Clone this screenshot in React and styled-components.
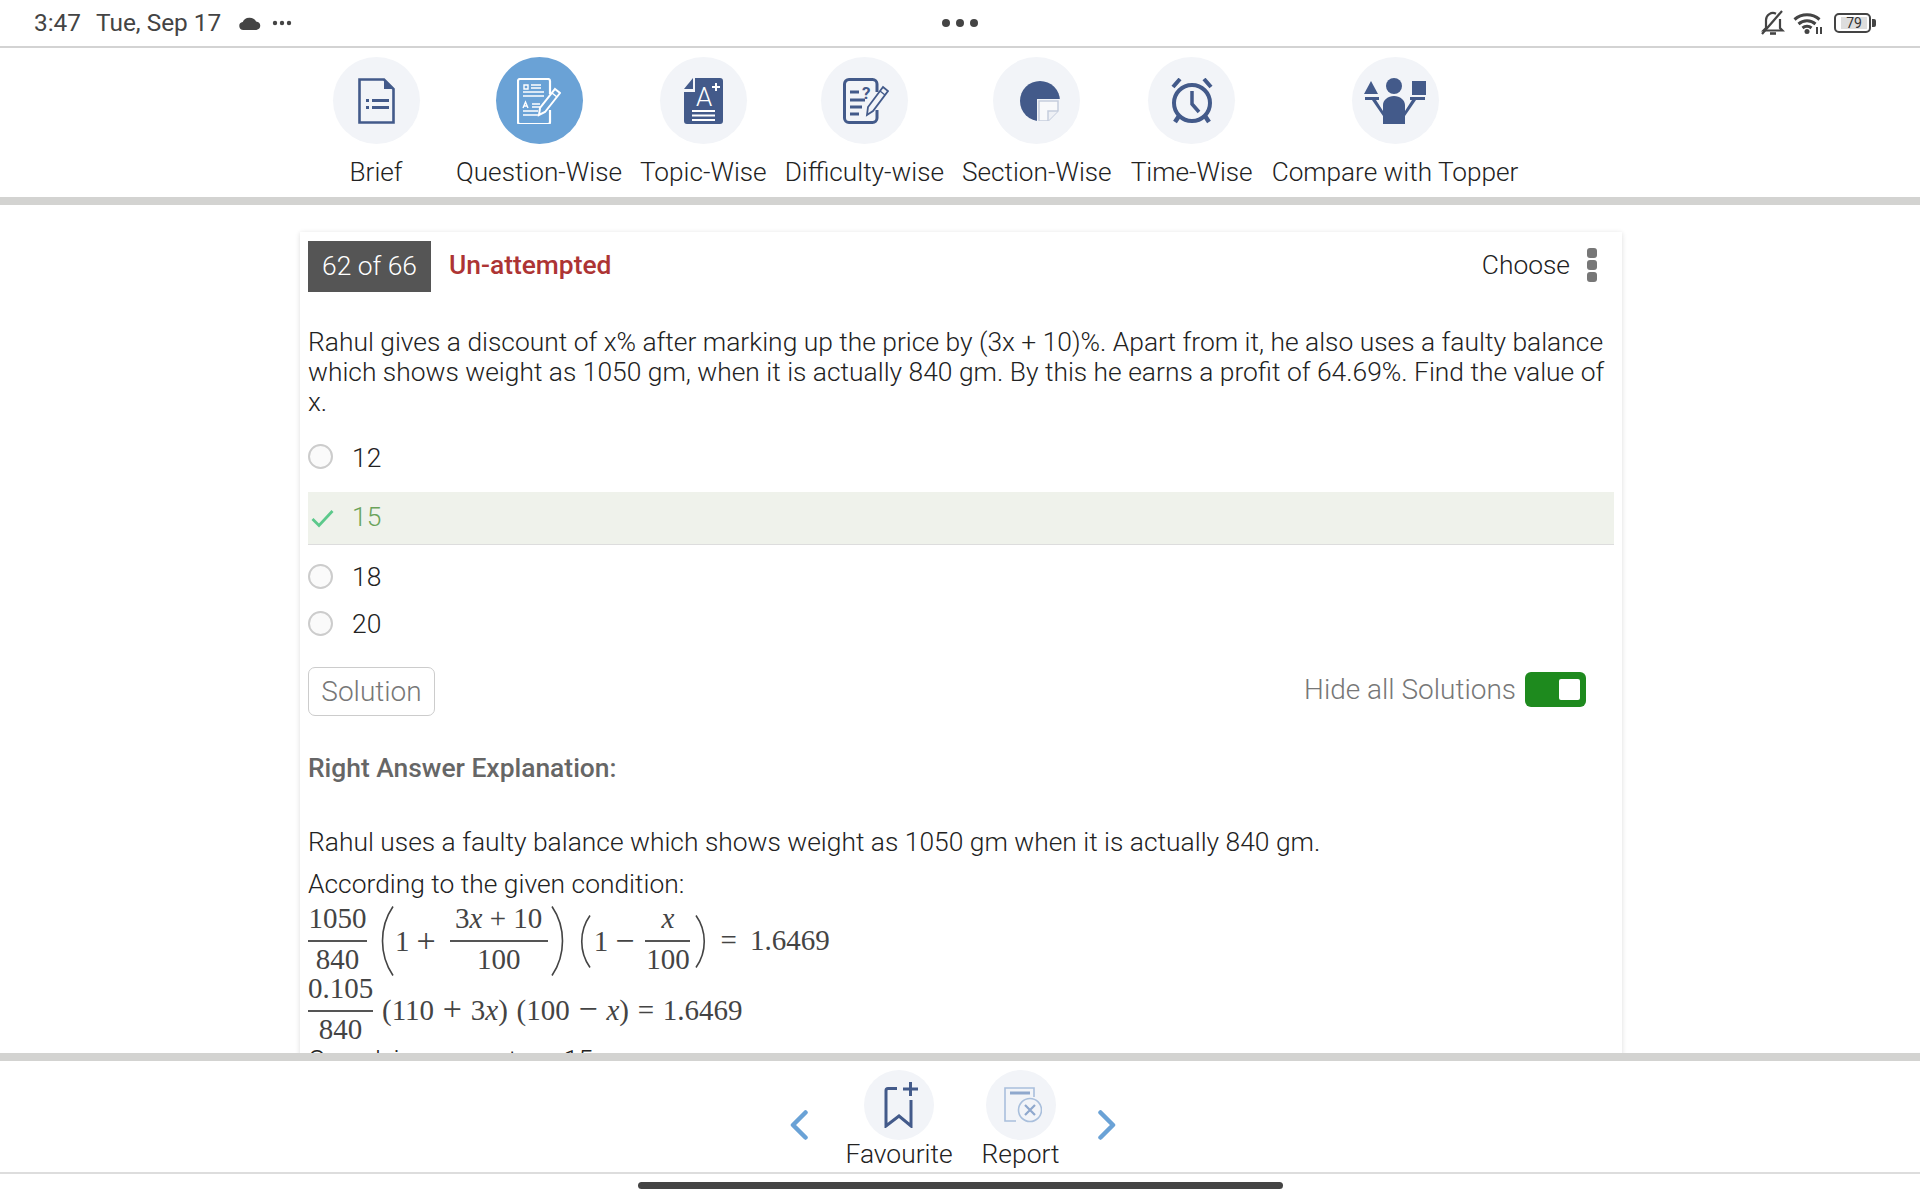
import React from "react";
import styled, { createGlobalStyle } from "styled-components";

const Global = createGlobalStyle`
  html, body { margin: 0; padding: 0; width: 1920px; height: 1200px; overflow: hidden; background: #fff; }
  body { font-family: Roboto, "Liberation Sans", sans-serif; color: #222; }
  * { box-sizing: border-box; }
`;

const INK = "#435a8a";

const Page = styled.div`
  width: 1920px; height: 1200px; display: flex; flex-direction: column; background: #fff;
`;
const StatusBar = styled.div`
  height: 48px; border-bottom: 2px solid #d3d3d3; display: grid; grid-template-columns: 1fr auto 1fr;
  align-items: center; padding: 0 43px; color: #444; flex: none;
`;
const StatusLeft = styled.div`display: flex; align-items: center; font-size: 24.4px; line-height: 28px; margin-left: -9px;`;
const DateText = styled.span`margin-left: 15px;`;
const CloudWrap = styled.span`display: flex; margin-left: 18px;`;
const MoreWrap = styled.span`display: flex; margin-left: 11px;`;
const CenterDots = styled.div`display: flex; gap: 6px; justify-self: center;`;
const CenterDot = styled.span`width: 8px; height: 8px; border-radius: 50%; background: #444;`;
const StatusRight = styled.div`display: flex; justify-content: flex-end; align-items: center; gap: 8px;`;
const Battery = styled.div`
  position: relative; width: 37px; height: 20px; border: 2px solid #444; border-radius: 5px; padding: 2px;
  margin-left: 2px; margin-right: 6px; font-size: 14px; line-height: 12px; color: #333;
  &::after { content: ""; position: absolute; right: -7px; top: 4px; width: 4px; height: 8px; background: #444; border-radius: 0 2px 2px 0; }
`;
const BatteryFill = styled.div`height: 12px; background: #ddd; text-align: center; width: 26px; margin-left: 3px; font-weight: 400;`;

const TabBar = styled.div`
  height: 157px; border-bottom: 8px solid #d3d3d1; display: flex; justify-content: flex-start; gap: 18px; flex: none;
  padding: 9px 0 0 314px;
`;
const Tab = styled.div`display: flex; flex-direction: column; align-items: center; min-width: 124px;`;
const TabCircle = styled.div`
  width: 87px; height: 87px; border-radius: 50%; display: flex; align-items: center; justify-content: center;
  padding-left: ${p => p.$pl || 0}px;
  background: ${p => (p.$active ? "#6aa2d6" : "#f2f4f8")};
`;
const TabLabel = styled.div`
  margin-top: 13px; font-size: 26.2px; font-weight: 300; line-height: 30px; color: #222; white-space: nowrap;
`;

const Main = styled.div`flex: 1; min-height: 0; overflow: hidden; padding: 27px 0 0 300px;`;
const Card = styled.div`
  width: 1322px; padding: 9px 8px 0; background: #fff; height: 1000px;
  box-shadow: 0 1px 5px rgba(0,0,0,.14);
`;
const CardHead = styled.div`display: flex; align-items: center; height: 51px; padding-right: 17px;`;
const Badge = styled.div`
  width: 123px; height: 51px; background: #555; color: #fff; font-size: 26.4px; font-weight: 300; padding-bottom: 2px;
  display: flex; align-items: center; justify-content: center;
`;
const HeadText = styled.div`padding-bottom: 4px;`;
const Status = styled(HeadText)`margin-left: 18px; color: #ad3434; font-size: 26.4px; font-weight: 500;`;
const Choose = styled(HeadText)`margin-left: auto; font-size: 26.4px; font-weight: 300; color: #222;`;
const Kebab = styled.div`display: flex; flex-direction: column; gap: 2px; margin: 0 0 3px 17px;`;
const KebabDot = styled.span`width: 10px; height: 10px; border-radius: 3px; background: #777;`;
const Question = styled.p`
  margin: 35px 0 0; font-size: 26.4px; font-weight: 300; line-height: 30px; color: #222;
`;
const Options = styled.div`display: flex; flex-direction: column; margin-top: 13px;`;
const Option = styled.div`
  display: flex; align-items: center; height: ${p => p.$h}px;
  ${p => p.$correct && `background: #eff2eb; border-bottom: 1px solid #ddd; margin: 10px 0 8px;`}
  font-size: 26.4px; font-weight: 300; color: ${p => (p.$correct ? "#6aa35a" : "#222")};
`;
const Radio = styled.span`
  width: 25px; height: 25px; border-radius: 50%; border: 2px solid #ccc; background: #fafafa; flex: none;
`;
const CheckBox = styled.span`width: 25px; height: 25px; display: flex; align-items: center; justify-content: center; flex: none; margin-left: 2px;`;
const OptionText = styled.span`
  margin-left: ${p => (p.$correct ? 17 : 19)}px;
  padding: ${p => (p.$correct ? "0 0 2px" : p.$tall ? "3px 0 0" : "1px 0 0")};
`;
const SolutionRow = styled.div`display: flex; align-items: center; margin-top: 20px; padding-right: 28px;`;
const SolutionBtn = styled.div`
  width: 127px; height: 49px; border: 1px solid #ccc; border-radius: 7px; color: #777;
  font-size: 28px; font-weight: 300; display: flex; align-items: center; justify-content: center;
`;
const HideLabel = styled.div`margin-left: auto; font-size: 28px; font-weight: 300; color: #777; position: relative; top: -2px;`;
const Toggle = styled.div`
  width: 61px; height: 35px; margin-left: 9px; border-radius: 6px; background: #1e8a1e; display: flex; align-items: center;
  justify-content: flex-end; padding-right: 6px; position: relative; top: -2px;
`;
const Knob = styled.span`width: 21px; height: 21px; background: #fff; border-radius: 2px;`;
const Heading = styled.div`margin-top: 37px; font-size: 26.4px; font-weight: 500; line-height: 30px; color: #666;`;
const Para = styled.div`margin-top: ${p => p.$mt}px; font-size: 26.4px; font-weight: 300; line-height: 30px; color: #222;`;
const MathBlock = styled.div`margin-top: 7px;`;
const MathRow = styled.div`
  display: flex; align-items: center; height: 70px; font-family: "Liberation Serif", serif; font-size: 29px; color: #444;
  white-space: nowrap;
`;
const Frac = styled.span`
  display: inline-flex; flex-direction: column; align-items: center; width: ${p => p.$w}px; flex: none; margin-left: ${p => p.$ml || 0}px;
`;
const Num = styled.span`line-height: 34px; height: 39px;`;
const Bar = styled.span`width: 100%; height: 2px; background: #555; flex: none;`;
const Den = styled.span`line-height: 35px; height: 39px;`;
const Piece = styled.span`
  margin: 0 0 ${p => p.$mb || 0}px ${p => p.$ml || 0}px; flex: none; word-spacing: ${p => p.$ws || 0}px;
`;
const Op = styled.span`font-size: 34px; line-height: 1;`;
const It = styled.i`font-style: italic;`;
const BigParen = styled.svg`flex: none; margin-left: ${p => p.$ml || 0}px;`;
const Clipped = styled.div`margin-top: -1px; font-size: 26.4px; font-weight: 300; line-height: 30px; color: #222;`;

const BottomBar = styled.div`
  height: 121px; flex: none; border-top: 8px solid #d3d3d1; border-bottom: 2px solid #ddd; display: flex; justify-content: center;
  padding: 9px 14px 0 0;
`;
const Chevron = styled.div`display: flex; align-items: flex-start; padding-top: 40px; margin: ${p => p.$m};`;
const BottomItem = styled.div`display: flex; flex-direction: column; align-items: center;`;
const BottomCircle = styled.div`
  width: 70px; height: 70px; border-radius: 50%; background: #f2f4f8; display: flex; align-items: center; justify-content: center; padding-left: 4px;
`;
const BottomLabel = styled.div`font-size: 26.4px; font-weight: 300; line-height: 30px; margin-top: -1px; color: #222; white-space: nowrap;`;
const BottomGap = styled.div`width: 29px;`;
const GestureZone = styled.div`height: 26px; flex: none; padding-top: 8px; display: flex; justify-content: center;`;
const GestureBar = styled.div`width: 645px; height: 7px; border-radius: 4px; background: #444;`;

const BriefIcon = () => (
  <svg width="37" height="46" viewBox="0 0 37 46">
    <path d="M1.5 1.5H26L35.5 11V44.5H1.5Z" fill="none" stroke={INK} strokeWidth="2.6" />
    <path d="M26 1.5V11H35.5Z" fill={INK} />
    <path d="M8 21h3v3H8zM8 28h3v3H8zM14 21h17v3H14zM14 28h17v3H14z" fill={INK} />
  </svg>
);
const QuestionIcon = () => (
  <svg width="44" height="46" viewBox="0 0 44 46" fill="none" stroke="#fff" strokeWidth="2">
    <path d="M33 16V3a2 2 0 0 0-2-2H3a2 2 0 0 0-2 2v41a2 2 0 0 0 2 2h28a2 2 0 0 0 2-2V32" strokeWidth="2.2" />
    <path d="M7 7h4v4H7z" strokeWidth="1.4" />
    <path d="M14 7h10M14 10h10M6 14h21M6 18h21M15 26h8M15 29h8M6 33h15M6 37h15" strokeWidth="1.5" />
    <path d="M6 30l2.5-6 2.5 6M7 28h3" strokeWidth="1.4" />
    <path d="M38 11l5 4-15 19-6 3 1-7z" fill="#6aa2d6" strokeWidth="2" />
    <path d="M35 15l5 4" strokeWidth="1.6" />
  </svg>
);
const TopicIcon = () => (
  <svg width="39" height="46" viewBox="0 0 39 46">
    <path d="M11 0H36a3 3 0 0 1 3 3V43a3 3 0 0 1-3 3H3a3 3 0 0 1-3-3V14H11Z" fill={INK} />
    <path d="M9 0V11H0Z" fill={INK} />
    <text x="20" y="28" textAnchor="middle" fontFamily="Roboto" fontWeight="300" fontSize="26" fill="#fff">A</text>
    <path d="M28 9h8M32 5v8" stroke="#fff" strokeWidth="2" />
    <path d="M8 33h23M8 37.500h23M8 42h23" stroke="#fff" strokeWidth="2" />
  </svg>
);
const DifficultyIcon = () => (
  <svg width="46" height="46" viewBox="0 0 46 46" fill="none" stroke={INK}>
    <path d="M34 14V6a4.500 4.500 0 0 0-4.500-4.500H6A4.500 4.500 0 0 0 1.500 6v34A4.500 4.500 0 0 0 6 44.500h23.500A4.500 4.500 0 0 0 34 40V32" strokeWidth="3" />
    <text x="19" y="21" fontFamily="Roboto" fontWeight="700" fontSize="17" fill={INK} stroke="none">?</text>
    <path d="M7 14h9M7 22h15M7 29h12M7 36h9" strokeWidth="3" />
    <path d="M40 9l5 4-15 20-6 4 1-8z" fill="#f2f4f8" strokeWidth="1.800" />
    <path d="M37 13l5 4" strokeWidth="1.500" />
  </svg>
);
const SectionIcon = () => (
  <svg width="40" height="40" viewBox="0 0 40 40">
    <circle cx="20" cy="20" r="20" fill={INK} />
    <path d="M17 18H40V40H17Z" fill="#f2f4f8" />
    <path d="M19 20H38V30L28 40H19Z" fill="#f8f9fb" stroke="#c5cddd" strokeWidth="1.500" />
    <path d="M38 30H28V40" fill="#eef0f5" stroke="#c5cddd" strokeWidth="1.500" />
  </svg>
);
const TimeIcon = () => (
  <svg width="44" height="46" viewBox="0 0 44 46" fill="none" stroke={INK}>
    <circle cx="22" cy="25" r="18" strokeWidth="4" />
    <path d="M22 13V26L29 34" strokeWidth="3.500" />
    <path d="M10 1L3 9M34 1l7 8" strokeWidth="4" />
    <path d="M9 38l-4 6M35 38l4 6" strokeWidth="4.500" />
  </svg>
);
const CompareIcon = () => (
  <svg width="62" height="46" viewBox="0 0 62 46" fill={INK}>
    <circle cx="30" cy="8" r="8" />
    <path d="M0 16L7 3L14 16Z" />
    <path d="M48 3H62V17H48Z" />
    <path d="M1 19H15V22H12L19 33V27C19 22 24 18 30 18C36 18 41 22 41 27V33L48 22H46V19H61V22H52L41 38V46H19V38L8 22H1Z" />
  </svg>
);
const CloudIcon = () => (
  <svg width="22" height="13" viewBox="0 0 20 13" preserveAspectRatio="none"><path d="M4 13a4 4 0 0 1-.6-7.900A6.500 6.500 0 0 1 15.500 4.500 4.300 4.300 0 0 1 15.800 13Z" fill="#444" /></svg>
);
const MoreIcon = () => (
  <svg width="20" height="6" viewBox="0 0 20 6" fill="#444"><circle cx="3" cy="3" r="2.200" /><circle cx="10" cy="3" r="2.200" /><circle cx="17" cy="3" r="2.200" /></svg>
);
const BellOffIcon = () => (
  <svg width="24" height="26" viewBox="0 0 24 26" fill="none" stroke="#444" strokeWidth="2.200">
    <path d="M5 18V10a7 7 0 0 1 10-6.300M19 9v9l2.500 2.500H2.500L5 18" />
    <path d="M9 23.500h6" strokeWidth="2.600" />
    <path d="M1 24L21 1" />
  </svg>
);
const WifiIcon = () => (
  <svg width="31" height="24" viewBox="0 0 31 24" fill="none" stroke="#444" strokeWidth="3">
    <path d="M1.500 8.500a19 19 0 0 1 25 0" />
    <path d="M5.500 13a13 13 0 0 1 17 0" />
    <path d="M9.500 17a7 7 0 0 1 9 0" />
    <circle cx="14" cy="20.500" r="2.500" fill="#444" stroke="none" />
    <path d="M24 16v7M28 16v7" strokeWidth="2" />
  </svg>
);
const CheckIcon = () => (
  <svg width="23" height="19" viewBox="0 0 23 19" fill="none" stroke="#5cc98b" strokeWidth="2.800"><path d="M1.500 10L8 16.500L21.500 2" /></svg>
);
const ParenSvg = ({ w, h, flip, ml }) => (
  <BigParen $ml={ml} width={w} height={h} viewBox={`0 0 ${w} ${h}`} fill="none" stroke="#444" strokeWidth="1.600">
    {flip
      ? <path d={`M1 0.500C${w + 1} ${h * 0.3} ${w + 1} ${h * 0.7} 1 ${h - 0.5}`} />
      : <path d={`M${w - 1} 0.500C-1 ${h * 0.3} -1 ${h * 0.7} ${w - 1} ${h - 0.5}`} />}
  </BigParen>
);
const LeftChevron = () => (
  <svg width="18" height="30" viewBox="0 0 18 30" fill="none" stroke="#6aa2d6" strokeWidth="4.500" strokeLinecap="round" strokeLinejoin="round"><path d="M15.500 2.500L3 15L15.500 27.500" /></svg>
);
const RightChevron = () => (
  <svg width="18" height="30" viewBox="0 0 18 30" fill="none" stroke="#6aa2d6" strokeWidth="4.500" strokeLinecap="round" strokeLinejoin="round"><path d="M2.500 2.500L15 15L2.500 27.500" /></svg>
);
const FavIcon = () => (
  <svg width="34" height="46" viewBox="0 0 34 46" fill="none" stroke={INK} strokeWidth="3">
    <path d="M13 6.500H4a2 2 0 0 0-2 2V44L15 34L27 44V18" />
    <path d="M19 7h15M26.500 0v14" />
  </svg>
);
const ReportIcon = () => (
  <svg width="38" height="36" viewBox="0 0 38 36" fill="none" stroke="#a9bfdc" strokeWidth="1.600">
    <path d="M30 10V1H1V34H12" />
    <path d="M6 6h20" strokeWidth="3" stroke="#8fa8cd" />
    <circle cx="26" cy="23" r="11.500" fill="#f2f4f8" />
    <path d="M21 18l10 10M31 18L21 28" stroke="#8fa8cd" strokeWidth="2.200" />
  </svg>
);

const tabs = [
  ["Brief", BriefIcon],
  ["Question-Wise", QuestionIcon, true],
  ["Topic-Wise", TopicIcon],
  ["Difficulty-wise", DifficultyIcon, false, 4],
  ["Section-Wise", SectionIcon, false, 7],
  ["Time-Wise", TimeIcon],
  ["Compare with Topper", CompareIcon],
];

export default function App() {
  return (
    <Page>
      <Global />
      <StatusBar>
        <StatusLeft>
          <span>3:47</span><DateText>Tue, Sep 17</DateText>
          <CloudWrap><CloudIcon /></CloudWrap>
          <MoreWrap><MoreIcon /></MoreWrap>
        </StatusLeft>
        <CenterDots><CenterDot /><CenterDot /><CenterDot /></CenterDots>
        <StatusRight>
          <BellOffIcon /><WifiIcon />
          <Battery><BatteryFill>79</BatteryFill></Battery>
        </StatusRight>
      </StatusBar>
      <TabBar>
        {tabs.map(([label, Icon, active, pl]) => (
          <Tab key={label}>
            <TabCircle $active={active} $pl={pl}><Icon /></TabCircle>
            <TabLabel>{label}</TabLabel>
          </Tab>
        ))}
      </TabBar>
      <Main>
        <Card>
          <CardHead>
            <Badge>62 of 66</Badge>
            <Status>Un-attempted</Status>
            <Choose>Choose</Choose>
            <Kebab><KebabDot /><KebabDot /><KebabDot /></Kebab>
          </CardHead>
          <Question>
            Rahul gives a discount of x% after marking up the price by (3x + 10)%. Apart from it, he also uses a faulty balance which shows weight as 1050 gm, when it is actually 840 gm. By this he earns a profit of 64.69%. Find the value of x.
          </Question>
          <Options>
            <Option $h={52}><Radio /><OptionText $tall>12</OptionText></Option>
            <Option $h={53} $correct><CheckBox><CheckIcon /></CheckBox><OptionText $correct>15</OptionText></Option>
            <Option $h={46}><Radio /><OptionText>18</OptionText></Option>
            <Option $h={48}><Radio /><OptionText>20</OptionText></Option>
          </Options>
          <SolutionRow>
            <SolutionBtn>Solution</SolutionBtn>
            <HideLabel>Hide all Solutions</HideLabel>
            <Toggle><Knob /></Toggle>
          </SolutionRow>
          <Heading>Right Answer Explanation:</Heading>
          <Para $mt={44}>Rahul uses a faulty balance which shows weight as 1050 gm when it is actually 840 gm.</Para>
          <Para $mt={12}>According to the given condition:</Para>
          <MathBlock>
            <MathRow>
              <Frac $w={59}><Num>1050</Num><Bar /><Den>840</Den></Frac>
              <ParenSvg w={14} h={70} ml={13} />
              <Piece $ml={1}>1</Piece>
              <Piece $ml={7}><Op>+</Op></Piece>
              <Frac $w={98} $ml={14}><Num>3<It>x</It> + 10</Num><Bar /><Den>100</Den></Frac>
              <ParenSvg w={14} h={70} flip ml={3} />
              <ParenSvg w={11} h={53} ml={15} />
              <Piece $ml={3}>1</Piece>
              <Piece $ml={7}><Op>−</Op></Piece>
              <Frac $w={45} $ml={11}><Num><It>x</It></Num><Bar /><Den>100</Den></Frac>
              <ParenSvg w={11} h={53} flip ml={5} />
              <Piece $ml={14} $ws={6} $mb={2}>= 1.6469</Piece>
            </MathRow>
            <MathRow>
              <Frac $w={65}><Num>0.105</Num><Bar /><Den>840</Den></Frac>
              <Piece $ml={9} $ws={1.5} $mb={4}>(110 <Op>+</Op> 3<It>x</It>) (100 <Op>−</Op> <It>x</It>) = 1.6469</Piece>
            </MathRow>
          </MathBlock>
          <Clipped>On solving, we get x = 15</Clipped>
        </Card>
      </Main>
      <BottomBar>
        <Chevron $m="0 38px 0 0"><LeftChevron /></Chevron>
        <BottomItem>
          <BottomCircle><FavIcon /></BottomCircle>
          <BottomLabel>Favourite</BottomLabel>
        </BottomItem>
        <BottomGap />
        <BottomItem>
          <BottomCircle><ReportIcon /></BottomCircle>
          <BottomLabel>Report</BottomLabel>
        </BottomItem>
        <Chevron $m="0 0 0 39px"><RightChevron /></Chevron>
      </BottomBar>
      <GestureZone><GestureBar /></GestureZone>
    </Page>
  );
}
